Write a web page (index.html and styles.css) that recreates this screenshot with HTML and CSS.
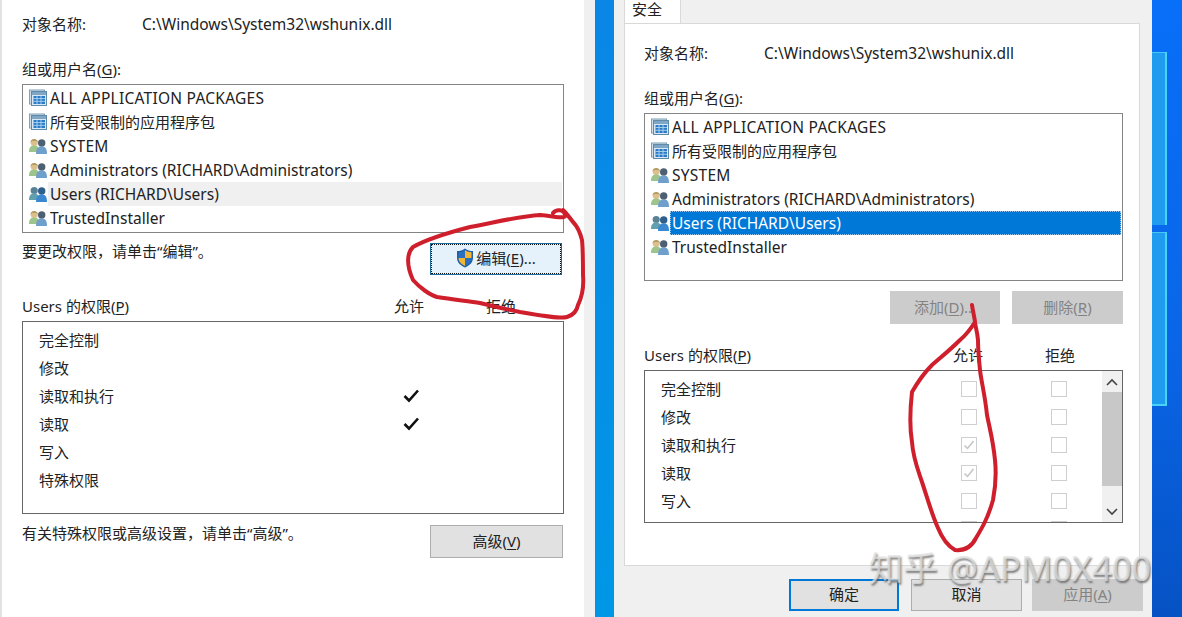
FILE: index.html
```html
<!DOCTYPE html>
<html lang="zh-CN">
<head>
<meta charset="utf-8">
<title>安全</title>
<link rel="stylesheet" href="styles.css">
</head>
<body>
<svg class="defs" width="0" height="0" aria-hidden="true">
  <defs>
    <symbol id="pkg" viewBox="0 0 18 18">
      <rect x="0.5" y="1" width="15" height="14" fill="#cfe0ec" stroke="#7fa0b8"/>
      <rect x="2.500" y="2.500" width="15" height="14" fill="#d8e8f4" stroke="#5f8aa8"/>
      <rect x="3" y="3" width="14" height="3" fill="#7fa6c4"/>
      <rect x="4.500" y="7" width="11.500" height="8" fill="#2a7cc8"/>
      <path d="M4.500 9.500h11.500M4.500 12.300h11.500M8 7v8M12 7v8" stroke="#bcdcf2" stroke-width="0.800"/>
    </symbol>
    <symbol id="grp" viewBox="0 0 18 18">
      <circle cx="5.200" cy="5.500" r="3.600" fill="#dcc08c"/>
      <path d="M1.600 5.500C1.600 1.200 8.800 1.200 8.800 5.500L7.500 3.800H3z" fill="#a88c56"/>
      <path d="M0 15c0-5 2-6.500 5.200-6.500s4.800 1.500 4.800 6.500z" fill="#9dc48a"/>
      <circle cx="12.700" cy="6" r="3.700" fill="#4f5f72"/>
      <path d="M7 17c0-6 2.500-7.500 5.700-7.500S18 11 18 17z" fill="#6f9fcc"/>
    </symbol>
    <symbol id="grp-sel" viewBox="0 0 18 18">
      <circle cx="5.200" cy="5.500" r="3.600" fill="#5a8296"/>
      <path d="M0 15c0-5 2-6.500 5.200-6.500s4.800 1.500 4.800 6.500z" fill="#62a0b0"/>
      <circle cx="12.700" cy="6" r="3.700" fill="#2f5f8c"/>
      <path d="M7 17c0-6 2.500-7.500 5.700-7.500S18 11 18 17z" fill="#3a88d0"/>
    </symbol>
  </defs>
</svg>

<main class="stage">
  <section class="left-pane">
    <div class="name-row"><span class="name-key">对象名称:</span><span class="lat">C:\Windows\System32\wshunix.dll</span></div>
    <div class="label label-gap">组或用户名(<u>G</u>):</div>
    <ul class="list list-left">
      <li class="row"><svg class="ico"><use href="#pkg"/></svg><span class="lat caps">ALL APPLICATION PACKAGES</span></li>
      <li class="row"><svg class="ico"><use href="#pkg"/></svg><span>所有受限制的应用程序包</span></li>
      <li class="row"><svg class="ico"><use href="#grp"/></svg><span class="lat caps">SYSTEM</span></li>
      <li class="row"><svg class="ico"><use href="#grp"/></svg><span class="lat">Administrators (RICHARD\Administrators)</span></li>
      <li class="row"><svg class="ico"><use href="#grp-sel"/></svg><span class="lat sel-grey">Users (RICHARD\Users)</span></li>
      <li class="row"><svg class="ico"><use href="#grp"/></svg><span class="lat">TrustedInstaller</span></li>
    </ul>
    <div class="action-row">
      <span class="hint">要更改权限，请单击“编辑”。</span>
      <button class="btn btn-edit">
        <svg class="shield" viewBox="0 0 18 20" width="18" height="20">
          <path d="M9 0.500C6.500 2.500 4 3 1 3v7c0 4.500 3.500 7.500 8 9.500 4.500-2 8-5 8-9.500V3c-3 0-5.500-.5-8-2.500z" fill="#1f5fa8"/>
          <path d="M9 2v8H2.500V4.200C5 4.200 7 3.500 9 2z" fill="#2a6fc0"/>
          <path d="M9 2c2 1.500 4 2.200 6.500 2.200V10H9z" fill="#f2b632"/>
          <path d="M2.500 10H9v8c-3.500-1.700-6.500-4.300-6.500-8z" fill="#f2b632"/>
          <path d="M9 10h6.500c0 3.700-3 6.300-6.500 8z" fill="#2a6fc0"/>
        </svg>
        <span>编辑(<u>E</u>)...</span>
      </button>
    </div>
    <div class="perm-head perm-head-left"><span>Users 的权限(<u>P</u>)</span><span>允许</span><span>拒绝</span></div>
    <div class="perm-box perm-box-left">
      <div class="perm-rows">
        <div class="perm-row perm-row-left"><span>完全控制</span></div>
        <div class="perm-row perm-row-left"><span>修改</span></div>
        <div class="perm-row perm-row-left"><span>读取和执行</span><svg class="tick" viewBox="0 0 16 16" width="16" height="16"><path d="M1.500 8l4.500 4.500 9-10" fill="none" stroke="#111" stroke-width="2.600"/></svg></div>
        <div class="perm-row perm-row-left"><span>读取</span><svg class="tick" viewBox="0 0 16 16" width="16" height="16"><path d="M1.500 8l4.500 4.500 9-10" fill="none" stroke="#111" stroke-width="2.600"/></svg></div>
        <div class="perm-row perm-row-left"><span>写入</span></div>
        <div class="perm-row perm-row-left"><span>特殊权限</span></div>
      </div>
    </div>
    <div class="advanced-row">
      <span class="hint">有关特殊权限或高级设置，请单击“高级”。</span>
      <button class="btn btn-advanced">高级(<u>V</u>)</button>
    </div>
  </section>

  <div class="gutter"></div>
  <div class="blue-strip"></div>

  <section class="right-dialog">
    <div class="tabs"><div class="tab">安全</div></div>
    <div class="panel">
      <div class="name-row name-row-right"><span class="name-key">对象名称:</span><span class="lat">C:\Windows\System32\wshunix.dll</span></div>
      <div class="label label-gap">组或用户名(<u>G</u>):</div>
      <ul class="list list-right">
        <li class="row"><svg class="ico"><use href="#pkg"/></svg><span class="lat caps">ALL APPLICATION PACKAGES</span></li>
        <li class="row"><svg class="ico"><use href="#pkg"/></svg><span>所有受限制的应用程序包</span></li>
        <li class="row"><svg class="ico"><use href="#grp"/></svg><span class="lat caps">SYSTEM</span></li>
        <li class="row"><svg class="ico"><use href="#grp"/></svg><span class="lat">Administrators (RICHARD\Administrators)</span></li>
        <li class="row"><svg class="ico"><use href="#grp-sel"/></svg><span class="lat sel-blue">Users (RICHARD\Users)</span></li>
        <li class="row"><svg class="ico"><use href="#grp"/></svg><span class="lat">TrustedInstaller</span></li>
      </ul>
      <div class="add-row">
        <button class="btn btn-off btn-w110">添加(<u>D</u>)...</button>
        <button class="btn btn-off btn-w111">删除(<u>R</u>)</button>
      </div>
      <div class="perm-head perm-head-right"><span>Users 的权限(<u>P</u>)</span><span>允许</span><span>拒绝</span></div>
      <div class="perm-box perm-box-right">
        <div class="perm-rows">
          <div class="perm-row perm-row-right"><span>完全控制</span><i class="cb"></i><i class="cb"></i></div>
          <div class="perm-row perm-row-right"><span>修改</span><i class="cb"></i><i class="cb"></i></div>
          <div class="perm-row perm-row-right"><span>读取和执行</span><i class="cb"><svg viewBox="0 0 14 14" width="14" height="14"><path d="M2.500 7.500l3 3 6-7.500" fill="none" stroke="#c4c4c4" stroke-width="1.500"/></svg></i><i class="cb"></i></div>
          <div class="perm-row perm-row-right"><span>读取</span><i class="cb"><svg viewBox="0 0 14 14" width="14" height="14"><path d="M2.500 7.500l3 3 6-7.500" fill="none" stroke="#c4c4c4" stroke-width="1.500"/></svg></i><i class="cb"></i></div>
          <div class="perm-row perm-row-right"><span>写入</span><i class="cb"></i><i class="cb"></i></div>
          <div class="perm-row perm-row-right"><span></span><i class="cb"></i><i class="cb"></i></div>
        </div>
        <div class="scrollbar">
          <div class="sb-btn"><svg viewBox="0 0 12 8" width="12" height="8"><path d="M1 7l5-5 5 5" fill="none" stroke="#444" stroke-width="1.600"/></svg></div>
          <div class="sb-track"><div class="sb-thumb"></div></div>
          <div class="sb-btn"><svg viewBox="0 0 12 8" width="12" height="8"><path d="M1 1l5 5 5-5" fill="none" stroke="#444" stroke-width="1.600"/></svg></div>
        </div>
      </div>
    </div>
    <div class="footer">
      <button class="btn btn-default">确定</button>
      <button class="btn btn-plain">取消</button>
      <button class="btn btn-off btn-apply">应用(<u>A</u>)</button>
    </div>
  </section>

  <aside class="desktop">
    <div class="pane pane-a"></div>
    <div class="pane pane-b"></div>
  </aside>

  <svg class="ink" viewBox="0 0 1182 617" width="1182" height="617" aria-hidden="true">
    <path d="M553 213C556 209 564 209 565 215C566 219 560 217 540 215C520 216 497 222 470 227C447 233 425 240 413 247C407 253 406 265 413 280C420 288 430 295 437 297C455 300 470 301 480 303C500 308 510 310 520 312C545 316 560 319 567 317C574 315 577 310 578 305C583 295 584 287 583 275C583 260 583 250 582 240C580 232 577 226 573 222C570 218 567 214 563 210"/>
    <path d="M972 305C973 312 975 320 975 322C970 330 966 335 960 340C950 350 940 358 932 365C925 372 920 378 912 392C910 410 910 430 912 442C913 458 918 470 922 482C928 500 932 515 938 528C942 538 948 546 955 550C965 551 972 546 976 538C982 528 988 518 993 500C996 485 996 470 995 460C993 440 990 430 987 415C985 395 981 380 980 370C979 360 978 350 978 340C977 330 975 325 975 322"/>
  </svg>

  <div class="watermark">知乎 @APM0X400</div>
</main>
</body>
</html>
```
FILE: styles.css
```css
* { box-sizing: border-box; }
html, body { margin: 0; padding: 0; }
body {
  width: 1182px;
  height: 617px;
  overflow: hidden;
  background: #f0f0f0;
  color: #222;
  font: 15px/24px "Noto Sans", "Noto Sans CJK SC", sans-serif;
}
.defs { position: absolute; }
.stage { position: relative; display: flex; width: 1182px; height: 617px; overflow: hidden; }
u { text-underline-offset: 2px; }
.lat { font-size: 15.5px; }
.caps { letter-spacing: .25px; }

/* left pane */
.left-pane {
  flex: 0 0 584px;
  background: #fff;
  border-left: 2px solid #e2e2e2;
  padding: 12px 20px 0 20px;
}
.name-row { display: flex; }
.name-key { flex: 0 0 120px; }
.label-gap { margin-top: 21px; }

.list { list-style: none; margin: 3px 0 0; padding: 1px; border: 1px solid #848484; background: #fff; }
.list-left { width: 542px; height: 149px; }
.list-right { width: 479px; height: 168px; }
.row { display: flex; align-items: center; height: 24px; padding-left: 5px; }
.row span { flex: 1; padding-left: 2px; height: 24px; }
.ico { flex: 0 0 18px; width: 18px; height: 18px; margin-right: 1px; }
.sel-grey { background: #f0f0f0; }
.sel-blue { background: #0078d7; color: #fff; outline: 1px dotted #9ac4e8; outline-offset: -1px; }

.hint { line-height: 16px; }
.action-row { display: flex; justify-content: space-between; align-items: flex-start; width: 540px; margin-top: 10px; }
.btn {
  display: flex;
  align-items: center;
  justify-content: center;
  padding: 0 0 2px;
  font: inherit;
  color: #222;
  border: 1px solid #adadad;
  background: #e1e1e1;
}
.btn-edit {
  width: 132px;
  height: 32px;
  background: #e5f1fb;
  border-color: #1b6d9c;
  outline: 1px dotted #111;
  outline-offset: -2px;
}
.shield { margin-right: 2px; }
.perm-head { display: grid; margin-top: 19px; }
.perm-head-left { grid-template-columns: 372px 92px 1fr; }
.perm-head-right { grid-template-columns: 309px 92px 1fr; }

.perm-box { display: flex; margin-top: 3px; border: 1px solid #666; background: #fff; overflow: hidden; }
.perm-box-left { width: 542px; height: 193px; }
.perm-box-right { width: 479px; height: 153px; }
.perm-rows { flex: 1; padding: 4px 0 0 16px; overflow: hidden; }
.perm-row { display: grid; height: 28px; align-items: center; line-height: 28px; }
.perm-row-left { grid-template-columns: 364px 16px; }
.perm-row-right { grid-template-columns: 300px 90px 16px; }
.tick { display: block; }
.cb { display: block; width: 16px; height: 16px; border: 1px solid #cfcfcf; background: #fff; }
.cb svg { display: block; margin: 0; }

.scrollbar { flex: 0 0 20px; display: flex; flex-direction: column; background: #f0f0f0; }
.sb-btn { flex: 0 0 21px; display: flex; align-items: center; justify-content: center; }
.sb-track { flex: 1; }
.sb-thumb { height: 94px; background: #c8c8c8; }

.advanced-row { display: flex; justify-content: space-between; align-items: flex-start; width: 541px; margin-top: 11px; }
.btn-advanced { width: 133px; height: 33px; }

/* strips between windows */
.gutter { flex: 0 0 11px; background: #f0f0f0; }
.blue-strip { flex: 0 0 19px; background: linear-gradient(#0a86e6, #0097e6); }

/* right dialog */
.right-dialog { flex: 0 0 538px; display: flex; flex-direction: column; background: #f0f0f0; padding: 0 12px 0 10px; }
.tabs { display: flex; height: 23px; }
.tab {
  width: 57px;
  height: 24px;
  background: #fff;
  border: 1px solid #d9d9d9;
  border-top: 0;
  border-bottom: 0;
  padding-left: 7px;
  line-height: 19px;
}
.panel { height: 543px; background: #fff; border: 1px solid #d9d9d9; padding: 17px 16px 0 19px; }
.add-row { display: flex; justify-content: flex-end; gap: 12px; width: 479px; margin-top: 10px; }
.btn-off { background: #cccccc; border-color: #cccccc; color: #838383; }
.btn-w110 { width: 110px; height: 33px; }
.btn-w111 { width: 111px; height: 33px; }
.footer { display: flex; padding: 13px 0 0 165px; }
.btn-default { width: 110px; height: 32px; border: 2px solid #0078d7; margin-right: 12px; }
.btn-plain { width: 111px; height: 32px; margin-right: 10px; }
.btn-apply { width: 111px; height: 32px; margin-right: -3px; }

/* desktop wallpaper */
.desktop {
  flex: 1;
  display: flex;
  flex-direction: column;
  background: linear-gradient(#086ff8, #0a66e8 55%, #0652c4);
  padding-top: 52px;
  gap: 7px;
}
.pane { width: 15px; background: #1f9cf0; border-right: 2px solid #48d2f5; border-top: 1px solid #48c8f0; }
.pane-a { height: 173px; }
.pane-b { height: 174px; border-bottom: 2px solid #48d2f5; }

/* overlays */
.ink { position: absolute; left: 0; top: 0; pointer-events: none; }
.ink path { fill: none; stroke: #cf1f2c; stroke-width: 4; stroke-linecap: round; stroke-linejoin: round; }
.watermark {
  position: absolute;
  left: 869px;
  top: 546px;
  font: 34.500px/44px "Noto Sans", "Noto Sans CJK SC", sans-serif;
  white-space: nowrap;
  color: rgba(225, 225, 225, .72);
  text-shadow: 1px 2px 2px rgba(90, 90, 90, .75);
}
```
